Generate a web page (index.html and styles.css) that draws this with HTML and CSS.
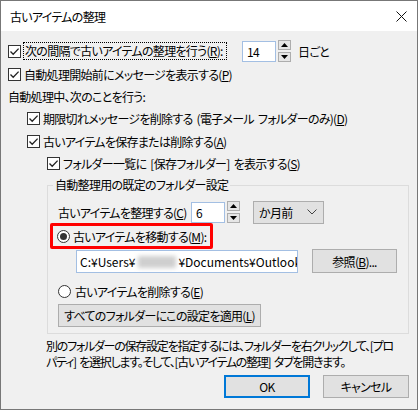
FILE: index.html
```html
<html>
<link rel="stylesheet" href="styles.css">

<head>
    <title>古いアイテムの整理</title>
</head>

<body>
    <div class="janela">
        <div class="titulo">
            <span>古いアイテムの整理</span>
            <svg class="fechar" width="11" height="11" viewBox="0 0 11 11"><path d="M0.5 0.5 L10.5 10.5 M10.5 0.5 L0.5 10.5" stroke="#111" stroke-width="1"/></svg>
        </div>

        <div class="conteudo">
            <div class="linha l1">
                <span class="caixa marcada"><svg width="11" height="11" viewBox="0 0 11 11"><path d="M1.5 5.5 L4.2 8.3 L9.6 2.6" fill="none" stroke="#222" stroke-width="1.3"/></svg></span>
                <span class="foco">次の間隔で古いアイテムの整理を行う(<u>R</u>):</span>
                <span class="entrada n14">14</span>
                <span class="giro"><b><svg width="7" height="4" viewBox="0 0 7 4"><path d="M3.5 0 L7 4 L0 4 Z" fill="#000"/></svg></b><b><svg width="7" height="4" viewBox="0 0 7 4"><path d="M0 0 L7 0 L3.5 4 Z" fill="#000"/></svg></b></span>
                <span class="sufixo">日ごと</span>
            </div>
            <div class="linha l2">
                <span class="caixa marcada"><svg width="11" height="11" viewBox="0 0 11 11"><path d="M1.5 5.5 L4.2 8.3 L9.6 2.6" fill="none" stroke="#222" stroke-width="1.3"/></svg></span>
                <span class="rotulo">自動処理開始前にメッセージを表示する(<u>P</u>)</span>
            </div>
            <div class="linha">
                <span>自動処理中、次のことを行う:</span>
            </div>
            <div class="linha nivel1">
                <span class="caixa marcada"><svg width="11" height="11" viewBox="0 0 11 11"><path d="M1.5 5.5 L4.2 8.3 L9.6 2.6" fill="none" stroke="#222" stroke-width="1.3"/></svg></span>
                <span class="rotulo">期限切れメッセージを削除する (電子メール フォルダーのみ)(<u>D</u>)</span>
            </div>
            <div class="linha nivel1 l5">
                <span class="caixa marcada"><svg width="11" height="11" viewBox="0 0 11 11"><path d="M1.5 5.5 L4.2 8.3 L9.6 2.6" fill="none" stroke="#222" stroke-width="1.3"/></svg></span>
                <span class="rotulo">古いアイテムを保存または削除する(<u>A</u>)</span>
            </div>
            <div class="linha nivel2">
                <span class="caixa marcada"><svg width="11" height="11" viewBox="0 0 11 11"><path d="M1.5 5.5 L4.2 8.3 L9.6 2.6" fill="none" stroke="#222" stroke-width="1.3"/></svg></span>
                <span class="rotulo">フォルダー一覧に [保存フォルダー] を表示する(<u>S</u>)</span>
            </div>

            <fieldset class="grupo">
                <legend>自動整理用の既定のフォルダー設定</legend>
                <div class="linha lc">
                    <span class="rot-c">古いアイテムを整理する(<u>C</u>)</span>
                    <span class="entrada n6">6</span>
                    <span class="giro"><b><svg width="7" height="4" viewBox="0 0 7 4"><path d="M3.5 0 L7 4 L0 4 Z" fill="#000"/></svg></b><b><svg width="7" height="4" viewBox="0 0 7 4"><path d="M0 0 L7 0 L3.5 4 Z" fill="#000"/></svg></b></span>
                    <span class="lista">か月前<svg width="10" height="6" viewBox="0 0 10 6"><path d="M0.5 0.5 L5 5 L9.5 0.5" fill="none" stroke="#444" stroke-width="1"/></svg></span>
                </div>
                <div class="destaque">
                    <span class="radio ativo"><i></i></span>
                    <span class="rotulo">古いアイテムを移動する(<u>M</u>):</span>
                </div>
                <div class="linha caminho">
                    <span class="campo">C:¥Users¥<span class="borrao"></span>¥Documents¥Outlook</span>
                    <span class="botao procurar">参照(<u>B</u>)...</span>
                </div>
                <div class="linha le">
                    <span class="radio"></span>
                    <span class="rotulo">古いアイテムを削除する(<u>E</u>)</span>
                </div>
                <span class="botao aplicar">すべてのフォルダーにこの設定を適用(<u>L</u>)</span>
            </fieldset>

            <p class="aviso">別のフォルダーの保存設定を指定するには、フォルダーを右クリックして、[プロ<br>パティ] を選択します。そして、[古いアイテムの整理] タブを開きます。</p>

            <div class="rodape">
                <span class="botao ok">OK</span>
                <span class="botao">キャンセル</span>
            </div>
        </div>
    </div>
</body>

</html>
```

FILE: styles.css
```css
body {
    margin: 0;
    font-family: "Noto Sans CJK JP", sans-serif;
    font-size: 12px;
    font-feature-settings: "palt";
    letter-spacing: -0.7px;
    color: #000;
}

.janela {
    width: 418px;
    height: 410px;
    box-sizing: border-box;
    border: 1px solid #777;
    background-color: #f0f0f0;
    overflow: hidden;
}

.titulo {
    height: 30px;
    background-color: white;
    display: flex;
    align-items: center;
    justify-content: space-between;
    padding-left: 9px;
    padding-right: 10px;
}

.fechar {
    margin-top: 1px;
}

.conteudo {
    padding-top: 9px;
    padding-left: 7px;
}

.linha {
    height: 22px;
    display: flex;
    align-items: center;
    white-space: nowrap;
}

.l2, .l5 {
    margin-top: 1px;
}

.nivel1 {
    padding-left: 19px;
}

.nivel2 {
    padding-left: 39px;
}

.caixa {
    width: 13px;
    height: 13px;
    box-sizing: border-box;
    border: 1px solid #333;
    background-color: white;
    display: flex;
    align-items: center;
    justify-content: center;
    flex-shrink: 0;
}

.rotulo {
    margin-left: 3px;
    word-spacing: 2px;
}

.foco {
    margin-left: 2px;
    width: 201px;
    height: 16px;
    line-height: 16px;
    border: 1px dotted #000;
    padding-left: 1px;
}

.entrada {
    height: 21px;
    box-sizing: border-box;
    border: 1px solid #a3bfe3;
    background-color: white;
    line-height: 19px;
    padding-left: 4px;
}

.n14 {
    width: 34px;
    margin-left: 15px;
}

.giro {
    display: flex;
    flex-direction: column;
    margin-left: 2px;
    height: 22px;
    justify-content: space-between;
}

.giro b {
    width: 13px;
    height: 10px;
    box-sizing: border-box;
    border: 1px solid #adadad;
    background-color: #e6e6e6;
    display: flex;
    align-items: center;
    justify-content: center;
}

.sufixo {
    margin-left: 7px;
}

.grupo {
    margin: 3px 0 0 39px;
    width: 362px;
    box-sizing: border-box;
    border: 1px solid #dcdcdc;
    padding: 8px 0 6px 10px;
}

.grupo legend {
    margin-left: -5px;
    padding: 0 2px;
    line-height: 16px;
}

.rot-c {
    width: 133px;
}

.n6 {
    width: 34px;
}

.lista {
    margin-left: 13px;
    width: 71px;
    height: 23px;
    box-sizing: border-box;
    border: 1px solid #adadad;
    background-color: #e1e1e1;
    display: flex;
    align-items: center;
    justify-content: space-between;
    padding: 0 6px 0 5px;
}

.destaque {
    margin-left: -8px;
    width: 163px;
    height: 26px;
    box-sizing: border-box;
    border: 3px solid #f00;
    border-radius: 2px;
    padding-left: 4px;
    display: flex;
    align-items: center;
    white-space: nowrap;
}

.radio {
    width: 13px;
    height: 13px;
    box-sizing: border-box;
    border: 1px solid #333;
    border-radius: 50%;
    background-color: white;
    display: flex;
    align-items: center;
    justify-content: center;
    flex-shrink: 0;
}

.radio i {
    width: 7px;
    height: 7px;
    border-radius: 50%;
    background-color: #333;
}

.caminho {
    height: 24px;
}

.campo {
    margin-left: 18px;
    width: 222px;
    height: 23px;
    box-sizing: border-box;
    border: 1px solid #a3bfe3;
    background-color: white;
    line-height: 21px;
    padding-left: 3px;
    overflow: hidden;
    white-space: nowrap;
    letter-spacing: 0;
}

.borrao {
    display: inline-block;
    width: 38px;
    height: 12px;
    margin: 0 2px 0 3px;
    vertical-align: -1px;
    background-color: #cfcfcf;
    filter: blur(2px);
}

.botao {
    height: 23px;
    box-sizing: border-box;
    border: 1px solid #adadad;
    background-color: #e1e1e1;
    display: inline-flex;
    align-items: center;
    justify-content: center;
    width: 86px;
    white-space: nowrap;
}

.procurar {
    margin-left: 14px;
    width: 85px;
    height: 24px;
}

.le {
    margin-top: 7px;
}

.le .rotulo {
    margin-left: 4px;
}

.aplicar {
    margin-top: 2px;
    width: 203px;
}

.aviso {
    margin: 4px 0 0 38px;
    line-height: 16px;
    white-space: nowrap;
    letter-spacing: -1.25px;
    word-spacing: 2px;
}

.rodape {
    margin-top: 5px;
    display: flex;
    justify-content: flex-end;
    gap: 13px;
    padding-right: 8px;
}

.ok {
    border: 2px solid #0078d7;
}
```
